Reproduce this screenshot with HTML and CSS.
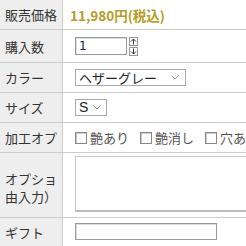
FILE: index.html
```html
<!DOCTYPE html>
<html lang="ja">
<head>
    <meta charset="UTF-8">
    <title>商品オプション</title>
    <link rel="stylesheet" href="styles.css">
</head>
<body>
    <div class="spec">
        <div class="row row-price">
            <div class="label"><div class="clip"><span>販売価格</span></div></div>
            <div class="value"><span class="price">11,980円(税込)</span></div>
        </div>
        <div class="row row-qty">
            <div class="label"><div class="clip"><span>購入数</span></div></div>
            <div class="value">
                <span class="num-box">1</span>
                <span class="spin">
                    <span class="spin-btn">
                        <svg width="7" height="7" viewBox="0 0 7 7"><path d="M3.5 6.5V1M1 3.5L3.5 1L6 3.5" fill="none" stroke="#333" stroke-width="1"/></svg>
                    </span>
                    <span class="spin-btn">
                        <svg width="7" height="7" viewBox="0 0 7 7"><path d="M3.5 0.5V6M1 3.5L3.5 6L6 3.5" fill="none" stroke="#333" stroke-width="1"/></svg>
                    </span>
                </span>
            </div>
        </div>
        <div class="row">
            <div class="label"><div class="clip"><span>カラー</span></div></div>
            <div class="value">
                <span class="select select-color">ヘザーグレー
                    <svg class="chev" width="8" height="5" viewBox="0 0 8 5"><path d="M0.5 0.5L4 4L7.5 0.5" fill="none" stroke="#999" stroke-width="1"/></svg>
                </span>
            </div>
        </div>
        <div class="row">
            <div class="label"><div class="clip"><span>サイズ</span></div></div>
            <div class="value">
                <span class="select select-size">S
                    <svg class="chev" width="8" height="5" viewBox="0 0 8 5"><path d="M0.5 0.5L4 4L7.5 0.5" fill="none" stroke="#999" stroke-width="1"/></svg>
                </span>
            </div>
        </div>
        <div class="row">
            <div class="label"><div class="clip"><span>加工オプション</span></div></div>
            <div class="value checks">
                <label class="check"><span class="box"></span>艶あり</label>
                <label class="check"><span class="box"></span>艶消し</label>
                <label class="check"><span class="box"></span>穴あけ</label>
            </div>
        </div>
        <div class="row row-memo">
            <div class="label"><div class="clip"><span>オプション（自由入力）</span></div></div>
            <div class="value"><span class="memo"></span></div>
        </div>
        <div class="row row-gift">
            <div class="label"><div class="clip"><span>ギフト</span></div></div>
            <div class="value"><span class="text-box"></span></div>
        </div>
    </div>
</body>
</html>
```

FILE: styles.css
```css
* {
    box-sizing: border-box;
    margin: 0;
    padding: 0;
}

body {
    background-color: #fff;
    font-family: "Noto Sans CJK JP", "Noto Sans", sans-serif;
    font-size: 13px;
    color: #333;
    overflow: hidden;
}

.spec {
    width: 320px;
}

.row {
    display: grid;
    grid-template-columns: 63px 1fr;
    height: 30px;
    border-bottom: 1px solid #ccc;
}

.row-qty {
    height: 33px;
}

.row-memo {
    height: 65px;
}

.row-gift {
    height: 40px;
    border-bottom: none;
}

.label {
    background-color: #eee;
    border-right: 1px solid #ccc;
    padding-left: 5px;
    display: flex;
    align-items: center;
}

.clip {
    width: 53px;
    overflow: hidden;
}

.clip span {
    display: block;
    width: 92px;
    line-height: 18px;
    padding-top: 1px;
}

.row-memo .clip span {
    padding-top: 6px;
}

.row-gift .label {
    align-items: flex-start;
    padding-top: 5px;
}

.value {
    padding-left: 7px;
    display: flex;
    align-items: center;
}

.price {
    color: #b59c26;
    font-weight: bold;
    font-size: 13.5px;
}

.num-box {
    margin-left: 5px;
    width: 52px;
    height: 18px;
    border: 1px solid #999;
    box-shadow: inset 1px 1px 0 #ddd;
    color: #102060;
    font-family: "DejaVu Sans", sans-serif;
    font-size: 12px;
    line-height: 16px;
    padding-left: 3px;
}

.spin {
    margin-left: 2px;
    display: flex;
    flex-direction: column;
    gap: 1px;
}

.spin-btn {
    width: 9px;
    height: 9px;
    border: 1px solid #999;
    display: flex;
    align-items: center;
    justify-content: center;
    background-color: #fff;
}

.select {
    margin-left: 5px;
    height: 17px;
    border: 1px solid #aaa;
    display: flex;
    align-items: center;
    justify-content: space-between;
    padding: 0 6px 0 3px;
    color: #222;
    line-height: 15px;
}

.select-color {
    width: 111px;
}

.select-size {
    width: 32px;
    padding-right: 5px;
    font-family: "Liberation Sans", sans-serif;
    font-size: 14px;
}

.chev {
    flex: none;
}

.checks {
    gap: 11px;
    padding-left: 12px;
    white-space: nowrap;
}

.check {
    display: flex;
    align-items: center;
    gap: 3px;
    color: #555;
}

.box {
    width: 12px;
    height: 12px;
    border: 1px solid #888;
    box-shadow: inset 1px 1px 0 #ccc;
    background-color: #fff;
}

.row-memo .value {
    align-items: flex-start;
    padding-top: 3px;
}

.memo {
    margin-left: 5px;
    width: 240px;
    height: 56px;
    border: 1px solid #c8c8c8;
    border-bottom: 2px solid #bbb;
}

.row-gift .value {
    align-items: flex-start;
    padding-top: 5px;
}

.text-box {
    margin-left: 5px;
    width: 142px;
    height: 17px;
    border: 1px solid #999;
    box-shadow: inset 1px 1px 0 #ddd;
}
```
